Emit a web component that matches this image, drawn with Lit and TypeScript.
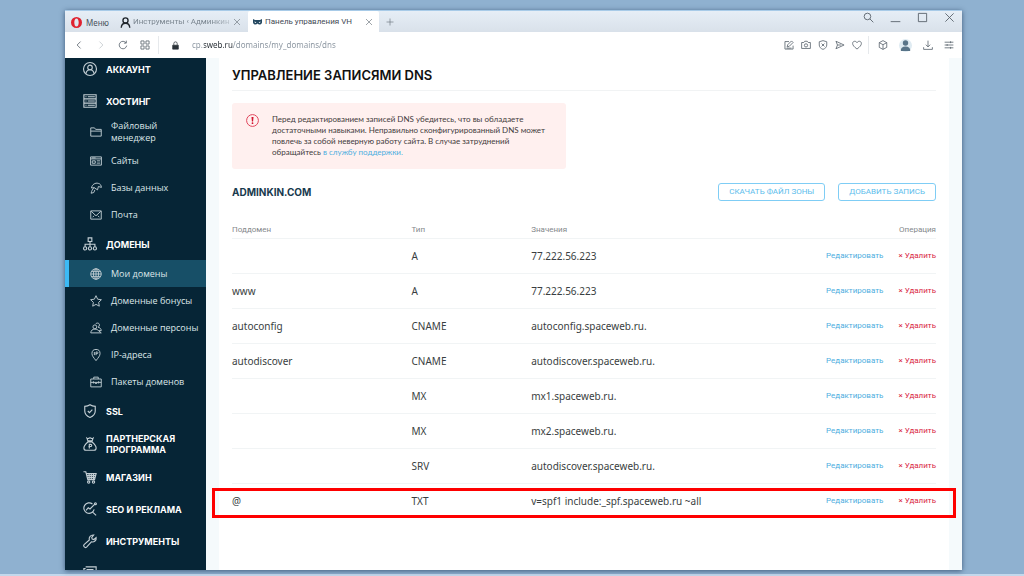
import { LitElement, html, css, svg, nothing, SVGTemplateResult } from "lit";
import { customElement, property } from "lit/decorators.js";
import { classMap } from "lit/directives/class-map.js";

/* Line icons on a 16-unit grid. */
const ICONS: Record<string, SVGTemplateResult> = {
  account: svg`<circle cx="8" cy="8" r="7.4"/><circle cx="8" cy="6.2" r="2.6"/><path d="M3.4 13.4c.3-3 2-4.6 4.6-4.6s4.3 1.600 4.600 4.600"/>`,
  hosting: svg`<path d="M1 .8h14v4.600H1zM1 5.600h14v4.800H1zM1 10.500h14v4.700H1zM5.500 3.100h8M5.500 8h8M5.500 12.900h8M2.800 3.100h1.200M2.800 8h1.200M2.800 12.900h1.200"/>`,
  folder: svg`<path d="M1 13.500v-11h5l1.500 2H15v9zM1 6.800h14"/>`,
  sites: svg`<path d="M.8 2.500h14.400v11H.8zM.8 5.200h14.400M3 7.800h4v3.200H3zM9 7.800h4.500M9 10.800h4.500M2.500 3.900h5"/>`,
  database: svg`<path d="M1.500 15c.5-3 2-5.500 4-7.500M2 8C2.500 3.500 7 .6 11 1.800c2.500.3 4 2.600 4.200 5.400l-4-1.200-1.200 4.500L5.500 7.500zM1.500 15l3.500-1 1.500-3.500"/>`,
  mail: svg`<path d="M1 2.500h14v11H1zM1.500 3l6.500 6 6.500-6M3.500 11l2-2M12.500 11l-2-2"/>`,
  domains: svg`<path d="M5.900 1h4.200v4.200H5.900zM8 5.200v6M2.400 11.200V8.300h11.200v2.900"/><circle cx="2.400" cy="13" r="1.800"/><circle cx="8" cy="13" r="1.800"/><circle cx="13.600" cy="13" r="1.800"/>`,
  globe: svg`<circle cx="8" cy="8" r="7"/><ellipse cx="8" cy="8" rx="3.400" ry="7"/><path d="M8 1v14M1 8h14M2 4.500h12M2 11.500h12"/>`,
  star: svg`<path d="M8 .9l2.200 4.700 5 .7-3.700 3.500.9 5.100L8 12.500l-4.400 2.400.9-5.100L.8 6.300l5-.7z"/>`,
  persons: svg`<circle cx="6.500" cy="6.500" r="2.600"/><path d="M1 14.500c.3-3.300 2.200-5 5.500-5 2.500 0 4 .8 5 2.200l3.500 2.800zM7.500 2.800C8.300 1 12.500.6 12.600 4c0 1.500-.8 2.500-1.800 3 2.600.5 4 2 4.200 4.500h-3.500"/>`,
  pin: svg`<path d="M8 15.500C5 11.500 2.600 9.300 2.600 6a5.400 5.400 0 0110.800 0c0 3.300-2.400 5.500-5.400 9.500z"/><path d="M5.800 4v4.200M8 8.200V4h1.500c1.500 0 1.500 2.200 0 2.200H8"/>`,
  packs: svg`<path d="M1 4h14v10.500H1zM5 4V1.500h6V4M1 8.500h14M4.500 7v3M11.500 7v3M7 8.500v1.500h2V8.500"/>`,
  shield: svg`<path d="M8 .8c2 1.400 4 1.800 6 1.900V8c0 3.600-2.600 6-6 7.400C4.600 14 2 11.600 2 8V2.700c2-.1 4-.5 6-1.900z"/><path d="M5.500 8l1.900 2 3.300-3.700"/>`,
  bag: svg`<path d="M5.600 4.500L4.500 1.300c1.500 1 2 .3 3.500-.5 1.500.8 2 1.500 3.500.5l-1.100 3.200zM5.600 5.700C3.500 7.500 1 10 1 12.500c0 2 1 2.700 2.500 2.700h9c1.500 0 2.500-.7 2.500-2.700 0-2.500-2.500-5-4.600-6.800z"/><path d="M7.200 13V8.400h1.500c1.700 0 1.700 2.500 0 2.500H6.300"/>`,
  cart: svg`<path d="M.5 2h2.700l2.300 9h7.700l1.800-6.800H3.800M4.600 6.500h10M5.200 8.700h8.600M7 4.500v6M9.500 4.500v6M12 4.500v6"/><circle cx="6.500" cy="13.800" r="1.300"/><circle cx="12" cy="13.800" r="1.300"/>`,
  seo: svg`<path d="M10.800 2.300A6 6 0 1012.800 8.500M11 11.500l4 3.700M3.500 9.500l2.500-3 2 1.500 5.500-5.500"/><circle cx="14.200" cy="1.900" r="1.100"/>`,
  wrench: svg`<path d="M1.200 12.200l6-5.400c-.8-3 1.500-6 5-5.600L10 3.800l.5 2 2 .5L15 4c.6 3.300-2.300 5.800-5.400 5l-5.500 6c-1.800 1.500-4.400-1.100-2.900-2.800z"/>`,
  stack: svg`<path d="M3 1h12v13H1V3h2M4 4h8"/>`,
  person: svg`<circle cx="8" cy="5" r="3.700" stroke-width="2"/><path stroke-width="2" d="M1.800 15.500C2 11 4.500 9 8 9s6 2 6.200 6.500"/>`,
  close: svg`<path d="M2 2l12 12M14 2L2 14"/>`,
  plus: svg`<path d="M8 1v14M1 8h14"/>`,
  back: svg`<path d="M10.500 2.500L5 8l5.500 5.500"/>`,
  forward: svg`<path d="M5.500 2.500L11 8l-5.500 5.500"/>`,
  reload: svg`<path d="M12.800 4.500A6 6 0 1013.900 9M13.300 1v4H9.500"/>`,
  grid: svg`<path d="M1.500 1.500h5v5h-5zM9.500 1.500h5v5h-5zM1.500 9.500h5v5h-5zM9.500 9.500h5v5h-5z"/>`,
  lock: svg`<path d="M3 7.500h10v7H3z" fill="currentColor"/><path d="M5 7V4.500a3 3 0 016 0V7"/>`,
  search: svg`<circle cx="6.500" cy="6.500" r="4.800"/><path d="M10 10l5 5"/>`,
  minimize: svg`<path d="M1 14h14"/>`,
  maximize: svg`<path d="M2 2h12v12H2z"/>`,
  edit: svg`<path d="M8 2.500H1.500v12h13V9M5 11l1-3.500 6-6L14.500 4l-6 6zM4 13h8"/>`,
  camera: svg`<path d="M1 4h3.500L6 2h4l1.500 2H15v9.500H1z"/><circle cx="8" cy="8.600" r="2.600"/>`,
  block: svg`<path d="M8 1l6 1.800V8c0 3.600-2.600 5.800-6 7-3.400-1.200-6-3.400-6-7V2.800zM5.700 5.700l4.600 4.600M10.300 5.700l-4.600 4.600"/>`,
  send: svg`<path d="M1.500 2l13 6-13 6L4 8zM4 8h6"/>`,
  heart: svg`<path d="M8 14.500C3.500 11 1 8.500 1 5.500 1 1.500 6 .8 8 4.200 10 .8 15 1.500 15 5.500c0 3-2.500 5.500-7 9z"/>`,
  cube: svg`<path d="M8 1l6 3.200v7.600L8 15l-6-3.200V4.200zM2 4.200l6 3.300 6-3.300M8 7.500V15"/>`,
  download: svg`<path d="M8 1v10M4.500 7.500L8 11l3.500-3.500M1 11.500V15h14v-3.500"/>`,
  sliders: svg`<path d="M1 3.500h14M1 8h14M1 12.500h14M10.500 2v3M5 6.500v3M10.500 11v3"/>`,
};

@customElement("line-icon")
class LineIcon extends LitElement {
  static styles = css`
    :host { display: inline-flex; flex: none; width: 12px; height: 12px; }
    .glyph { width: 100%; height: 100%; overflow: visible; fill: none; stroke: currentColor; stroke-width: 1.3; }
  `;
  @property() name = "";
  render() {
    return html`<svg class="glyph" viewBox="0 0 16 16" aria-hidden="true">${ICONS[this.name] ?? nothing}</svg>`;
  }
}

@customElement("browser-chrome")
class BrowserChrome extends LitElement {
  static styles = css`
    :host { display: block; flex: none; font: 8px/12px "Noto Sans", "Open Sans", sans-serif; color: #4a535c; }
    button { all: unset; display: flex; align-items: center; justify-content: center; cursor: default; }
    .titlebar { display: flex; height: 22px; background: linear-gradient(#e6eef6, #d9e1ea); border-top: 1px solid #a8cbe8; box-sizing: border-box; }
    .menu { gap: 4px; padding: 2px 0 0 6px; width: 44px; justify-content: flex-start; }
    .opera { width: 11px; height: 11px; }
    .tab { display: flex; align-items: center; box-sizing: border-box; gap: 2px; padding: 1px 7px 0 5px; width: 133px; color: #7c8791; font-family: Roboto, sans-serif; }
    .tab.active { width: 131px; gap: 3px; padding: 0 6px 0 5px; background: #fff; color: #3f4a55; border-radius: 2px 2px 0 0; }
    .label { flex: 1; min-width: 0; overflow: hidden; white-space: nowrap; }
    .fade { mask-image: linear-gradient(90deg, #000 80%, rgba(0, 0, 0, 0.3)); }
    .tab .person { width: 11px; height: 11px; color: #20262c; }
    .close { width: 8px; height: 8px; color: #6b747c; }
    .mask { width: 9px; height: 6px; flex: none; }
    .new { width: 21px; }
    .new .icon { width: 8px; height: 8px; color: #6b747c; }
    .spacer { flex: 1; }
    .window { display: flex; gap: 16px; padding: 0 7px 8px 0; align-items: center; color: #59626b; }
    .window .icon { width: 11px; height: 11px; }
    .toolbar { display: flex; align-items: center; height: 26px; background: #fff; padding: 0 8px 0 9px; box-sizing: border-box; color: #59636d; }
    .nav { display: flex; align-items: center; gap: 12px; }
    .nav .icon { width: 10px; height: 10px; }
    .dim { color: #c3c8cd; }
    .divider { width: 1px; height: 18px; background: #e6e9ec; margin: 0 8px; }
    .lock { width: 9px; height: 9px; color: #2b3238; margin: 0 12px 0 4px; }
    .address {
      flex: 1; min-width: 0; border: 0; padding: 0 0 1px; outline: 0; font: inherit; height: 14px;
      color: transparent; caret-color: #333;
      background: linear-gradient(90deg, #87929d 12px, #252c33 12px 41px, #87929d 41px);
      background-clip: text; -webkit-background-clip: text;
    }
    .tools { display: flex; align-items: center; gap: 7px; }
    .tools .icon { width: 10px; height: 10px; }
    .tools .divider { margin: 0 2px 0 -1px; }
    .wide { display: flex; align-items: center; gap: 11px; }
    .avatar { width: 13px; height: 13px; }
  `;
  render() {
    const icon = (name: string, label: string, cls = "icon") =>
      html`<button aria-label=${label}><line-icon class=${cls} name=${name}></line-icon></button>`;
    return html`
      <div class="titlebar">
        <button class="menu">
          <svg class="opera" viewBox="0 0 10 10" aria-hidden="true"><path fill="#e0222f" fill-rule="evenodd" d="M5 0a5 5 0 100 10A5 5 0 005 0zm0 1.300c1.300 0 2 1.600 2 3.700s-.7 3.700-2 3.700S3 7.100 3 5s.7-3.700 2-3.700z"/></svg>
          Меню
        </button>
        <div class="tab">
          <line-icon class="person" name="person"></line-icon>
          <span class="label fade">Инструменты ‹ Админкин</span>
          ${icon("close", "Закрыть", "close")}
        </div>
        <div class="tab active">
          <svg class="mask" viewBox="0 0 9 6" aria-hidden="true"><path fill="#244860" d="M0 0l2 .9h5L9 0v3.500C8.500 6 5.500 6 4.500 4.500 3.500 6 .5 6 0 3.500z"/><path fill="#fff" d="M1.500 2.500l1.800.7-.6.900-1-.5zM7.500 2.500l-1.800.7.6.9 1-.5z"/></svg>
          <span class="label">Панель управления VH</span>
          ${icon("close", "Закрыть", "close")}
        </div>
        <button class="new" aria-label="Новая вкладка"><line-icon class="icon" name="plus"></line-icon></button>
        <div class="spacer"></div>
        <div class="window">
          ${icon("search", "Поиск")}${icon("minimize", "Свернуть")}${icon("maximize", "Развернуть")}${icon("close", "Закрыть окно")}
        </div>
      </div>
      <div class="toolbar">
        <div class="nav">
          ${icon("back", "Назад")}${icon("forward", "Вперёд", "icon dim")}${icon("reload", "Обновить")}${icon("grid", "Экспресс-панель")}
        </div>
        <span class="divider"></span>
        <line-icon class="lock" name="lock"></line-icon>
        <input class="address" aria-label="Адрес" value="cp.sweb.ru/domains/my_domains/dns" />
        <div class="tools">
          ${icon("edit", "Заметка")}${icon("camera", "Снимок")}${icon("block", "Блокировка")}${icon("send", "Отправить")}${icon("heart", "Закладка")}
          <span class="divider"></span>
          <div class="wide">
            ${icon("cube", "Кошелёк")}
            <svg class="avatar" viewBox="0 0 13 13" aria-hidden="true"><circle cx="6.500" cy="6.500" r="6.500" fill="#dfebf2"/><circle cx="6.500" cy="4" r="2.700" fill="#587488"/><path fill="#587488" d="M1.800 12c-.3-3 1.500-4.500 4.700-4.500s5 1.500 4.700 4.500z"/></svg>
            ${icon("download", "Загрузки")}${icon("sliders", "Настройка")}
          </div>
        </div>
      </div>
    `;
  }
}

interface Section { icon: string; text: string; items?: { icon: string; text: string; active?: boolean }[] }

const MENU: Section[] = [
  { icon: "account", text: "АККАУНТ" },
  { icon: "hosting", text: "ХОСТИНГ", items: [
    { icon: "folder", text: "Файловый менеджер" },
    { icon: "sites", text: "Сайты" },
    { icon: "database", text: "Базы данных" },
    { icon: "mail", text: "Почта" },
  ] },
  { icon: "domains", text: "ДОМЕНЫ", items: [
    { icon: "globe", text: "Мои домены", active: true },
    { icon: "star", text: "Доменные бонусы" },
    { icon: "persons", text: "Доменные персоны" },
    { icon: "pin", text: "IP-адреса" },
    { icon: "packs", text: "Пакеты доменов" },
  ] },
  { icon: "shield", text: "SSL" },
  { icon: "bag", text: "ПАРТНЕРСКАЯ ПРОГРАММА" },
  { icon: "cart", text: "МАГАЗИН" },
  { icon: "seo", text: "SEO И РЕКЛАМА" },
  { icon: "wrench", text: "ИНСТРУМЕНТЫ" },
  { icon: "stack", text: "" },
];

@customElement("side-menu")
class SideMenu extends LitElement {
  static styles = css`
    :host { display: block; flex: none; width: 141px; overflow: hidden; background: #062536; color: #fff; }
    .list { list-style: none; margin: 0; padding: 0; }
    .root { margin-top: -5px; }
    a { display: flex; align-items: center; box-sizing: border-box; color: inherit; text-decoration: none; }
    .section { min-height: 32px; gap: 9px; padding: 6px 8px 6px 18px; font: 700 9px/11px Inter, sans-serif; }
    .section .icon { width: 14px; height: 14px; color: #c3ced4; }
    .item { min-height: 27px; gap: 9px; padding: 3px 4px 3px 25px; font: 500 9px/12px "Open Sans", sans-serif; color: #dde5e9; }
    .item.active { background: #174f67; border-left: 4px solid #3cbaf6; padding-left: 21px; }
    .item .icon { width: 12px; height: 12px; color: #b8c5cc; }
  `;
  render() {
    return html`<nav><ul class="list root">
      ${MENU.map((s) => html`<li>
        <a class="section" href="#"><line-icon class="icon" name=${s.icon}></line-icon><span>${s.text}</span></a>
        ${s.items ? html`<ul class="list">${s.items.map((i) => html`<li>
          <a class=${classMap({ item: true, active: !!i.active })} href="#"><line-icon class="icon" name=${i.icon}></line-icon><span>${i.text}</span></a>
        </li>`)}</ul>` : nothing}
      </li>`)}
    </ul></nav>`;
  }
}

const RECORDS = [
  ["", "A", "77.222.56.223"],
  ["www", "A", "77.222.56.223"],
  ["autoconfig", "CNAME", "autoconfig.spaceweb.ru."],
  ["autodiscover", "CNAME", "autodiscover.spaceweb.ru."],
  ["", "MX", "mx1.spaceweb.ru."],
  ["", "MX", "mx2.spaceweb.ru."],
  ["", "SRV", "autodiscover.spaceweb.ru."],
  ["@", "TXT", "v=spf1 include:_spf.spaceweb.ru ~all"],
];

@customElement("dns-page")
class DnsPage extends LitElement {
  static styles = css`
    :host { display: block; flex: 1; min-width: 0; padding: 0 13px; background: #f5fafc; font: 8px/12px Roboto, sans-serif; color: #3c4246; }
    .panel { box-sizing: border-box; height: 100%; padding: 9px 13px 0; background: #fff; }
    .title { margin: 0 0 12px; padding-bottom: 7px; border-bottom: 1px solid #f1f3f4; font: 600 13px/16px Inter, sans-serif; color: #111; }
    .alert { display: flex; gap: 13px; box-sizing: border-box; max-width: 334px; padding: 11px 18px 11px 14px; margin-bottom: 14px; background: #fff0ef; border-radius: 3px; }
    .mark { flex: none; width: 13px; height: 13px; }
    .note { margin: 0; font: 8px/11px Lato, "Liberation Sans", sans-serif; color: #3f3b3c; }
    a { color: #4eaee0; text-decoration: none; }
    .bar { display: flex; align-items: center; gap: 13px; margin-bottom: 20px; }
    .domain { flex: 1; margin: 0; font: 700 10px/18px Inter, sans-serif; color: #183a4e; }
    .action { box-sizing: border-box; height: 18px; padding: 0 10px; border: 1px solid #7fcdf5; border-radius: 3px; background: #fff; color: #5cbdec; font: 8px/12px Roboto, sans-serif; }
    .records { width: 100%; border-spacing: 0; table-layout: fixed; }
    th { padding: 0; height: 18px; box-sizing: border-box; border-bottom: 1px solid #f1f4f5; text-align: left; font-weight: 400; color: #85898c; }
    th.sub { width: 25.5%; }
    th.type { width: 17%; }
    th.ops { text-align: right; }
    td { padding: 0; height: 35px; box-sizing: border-box; border-bottom: 1px solid #f1f4f5; font: 10px/14px "Noto Sans", sans-serif; color: #393e41; }
    tr.marked { position: relative; }
    tr.marked td { border-bottom-color: transparent; }
    .frame { position: absolute; inset: 4px -20px 1px -20px; border: 3px solid #fe0000; pointer-events: none; }
    .links { display: flex; justify-content: flex-end; gap: 15px; font: 8px/12px Roboto, sans-serif; }
    .remove { color: #d9263f; }
  `;
  render() {
    return html`<main class="panel">
      <h1 class="title">УПРАВЛЕНИЕ ЗАПИСЯМИ DNS</h1>
      <div class="alert" role="note">
        <svg class="mark" viewBox="0 0 13 13" aria-hidden="true"><circle cx="6.500" cy="6.500" r="5.900" fill="none" stroke="#e0455c" stroke-width="1"/><path d="M5.500 3h2l-.4 4.500H5.900z" fill="#d3122e"/><circle cx="6.500" cy="9.200" r=".9" fill="#d3122e"/></svg>
        <p class="note">Перед редактированием записей DNS убедитесь, что вы обладаете<br />достаточными навыками. Неправильно сконфигурированный DNS может<br />повлечь за собой неверную работу сайта. В случае затруднений<br />обращайтесь <a href="#">в службу поддержки.</a></p>
      </div>
      <div class="bar">
        <h2 class="domain">ADMINKIN.COM</h2>
        <button class="action">СКАЧАТЬ ФАЙЛ ЗОНЫ</button>
        <button class="action">ДОБАВИТЬ ЗАПИСЬ</button>
      </div>
      <table class="records">
        <thead><tr><th class="sub">Поддомен</th><th class="type">Тип</th><th>Значения</th><th class="ops">Операция</th></tr></thead>
        <tbody>
          ${RECORDS.map(([sub, type, value], i) => html`<tr class=${classMap({ marked: i === RECORDS.length - 1 })}>
            <td>${sub}</td><td>${type}</td><td>${value}</td>
            <td><div class="links"><a href="#">Редактировать</a><a class="remove" href="#">× Удалить</a></div>
              ${i === RECORDS.length - 1 ? html`<div class="frame"></div>` : nothing}</td>
          </tr>`)}
        </tbody>
      </table>
    </main>`;
  }
}

@customElement("app-root")
class AppRoot extends LitElement {
  static styles = css`
    :host { display: flex; box-sizing: border-box; height: 100vh; padding: 10px 62px 4px 65px; background: #8fb1d0; border-bottom: 2px solid #c3d8ec; }
    .window { display: flex; flex-direction: column; flex: 1; min-width: 0; overflow: hidden; box-shadow: 0 1px 5px rgba(20, 45, 75, 0.65); }
    .body { display: flex; flex: 1; min-height: 0; }
  `;
  render() {
    return html`<div class="window">
      <browser-chrome></browser-chrome>
      <div class="body"><side-menu></side-menu><dns-page></dns-page></div>
    </div>`;
  }
}
